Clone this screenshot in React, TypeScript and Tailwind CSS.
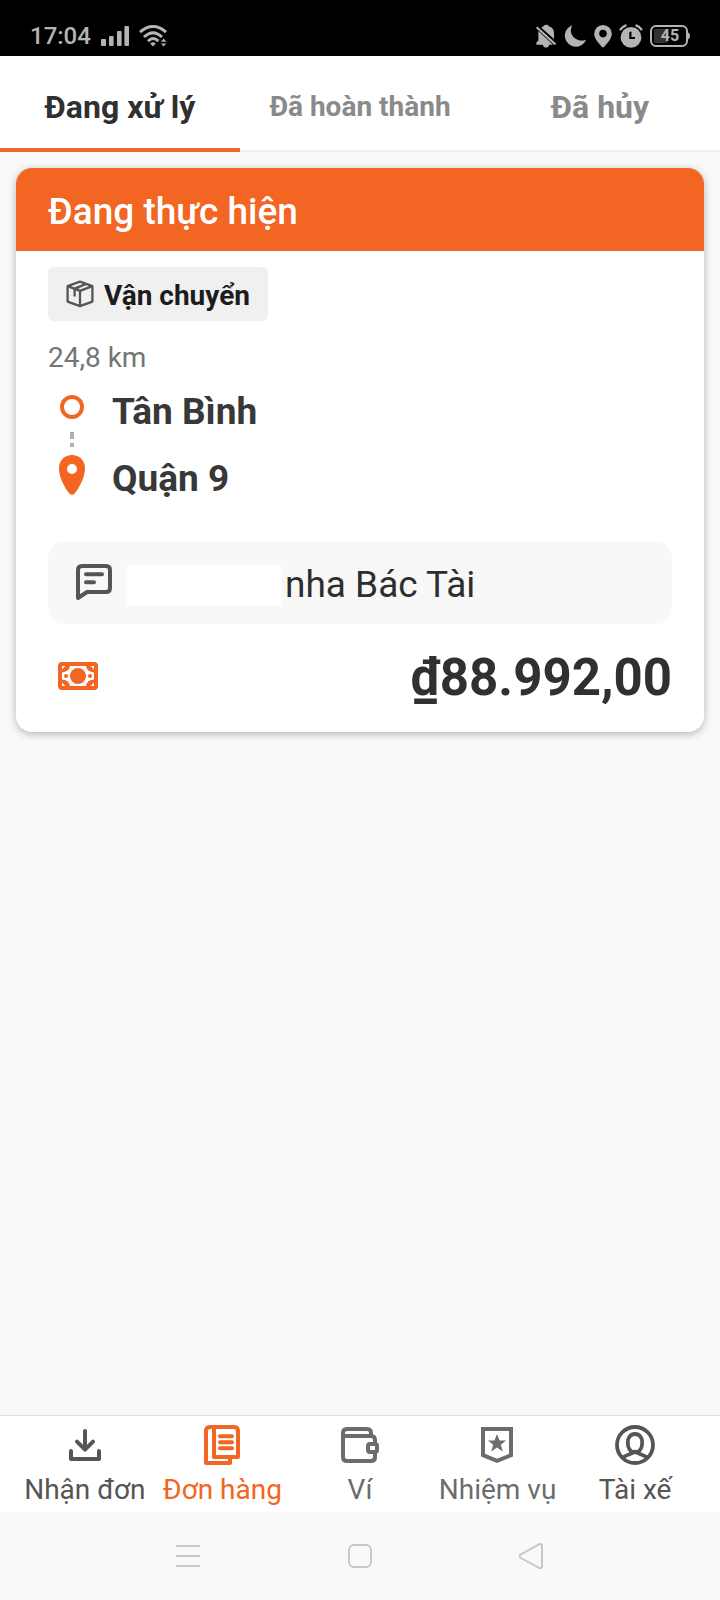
import { ReactNode, useState } from "react";
import clsx from "clsx";

const SignalIcon = () => (
  <svg width="28" height="20" viewBox="0 0 28 20" fill="currentColor">
    <rect x="0" y="13" width="5" height="7" rx="1" />
    <rect x="8" y="10" width="4.6" height="10" rx="1" />
    <rect x="16" y="5" width="4.6" height="15" rx="1" />
    <rect x="23.4" y="0" width="4.6" height="20" rx="1" />
  </svg>
);

const WifiIcon = () => (
  <svg width="28" height="22" viewBox="0 0 28 22" fill="none" stroke="currentColor">
    <path d="M1 7.2Q14-4.2 27 7.2" strokeWidth="3" />
    <path d="M5 12Q14 3.6 23 12" strokeWidth="3" />
    <path d="M9 16.2Q14 11 19.4 16.2" strokeWidth="3" />
    <path d="M11.2 18.4Q14 16.2 16.8 18.4L14 21.6Z" fill="currentColor" stroke="none" />
    <path d="M22 16.8 24.6 13.6 27.4 16.8ZM22 18.4 24.6 21.6 27.4 18.4Z" fill="currentColor" stroke="none" />
  </svg>
);

const BellOffIcon = () => (
  <svg width="20" height="24" viewBox="0 0 20 24" fill="currentColor">
    <path d="M7.6 2.2Q8.4 .8 10.4 .8T12.8 2.2Q18 3.6 18 9V15L5.4 3.8Q6.2 2.6 7.6 2.2Z" />
    <path d="M2.4 7 17 20.8H13.2Q12.6 23.6 10 23.6T6.8 20.8H.4V18.4L2.4 16.6Z" />
    <path d="M.6 3.2 19.4 20.4" stroke="currentColor" strokeWidth="2" fill="none" />
  </svg>
);

const MoonIcon = () => (
  <svg width="24" height="24" viewBox="0 0 24 24" fill="currentColor">
    <path d="M9.4 1.2A11 11 0 1 0 23.2 15.4Q19.6 17.4 15.2 16Q8.6 13.6 7.8 7.6Q7.6 4 9.4 1.2Z" />
  </svg>
);

const StatusPinIcon = () => (
  <svg width="18" height="24" viewBox="0 0 18 24" fill="currentColor" fillRule="evenodd">
    <path d="M9 1A8.8 8.8 0 0 1 17.8 9.8C17.8 15 13 19.6 10.2 22.8Q9 24 7.8 22.8C5 19.6.2 15 .2 9.8A8.8 8.8 0 0 1 9 1ZM9 5.8A3.8 3.8 0 1 0 9 13.4 3.8 3.8 0 0 0 9 5.8Z" />
  </svg>
);

const AlarmIcon = () => (
  <svg width="24" height="24" viewBox="0 0 24 24" fill="none">
    <circle cx="12" cy="13.4" r="10.4" fill="currentColor" />
    <path d="M1 6.2Q3.4 2.6 7.4 1.2M23 6.2Q20.6 2.6 16.6 1.2" stroke="currentColor" strokeWidth="2.4" />
    <path d="M11.4 7.8V14H16" stroke="#000" strokeWidth="2.2" />
  </svg>
);

const BatteryIcon = () => (
  <svg width="40" height="22" viewBox="0 0 40 22" fill="none">
    <rect x="4" y="4" width="14" height="14" rx="2" fill="#333" />
    <rect x="1" y="1" width="36" height="20" rx="5" stroke="currentColor" strokeWidth="2" />
    <path d="M38 7.6Q40 8 40 11T38 14.4Z" fill="currentColor" />
  </svg>
);

const BoxIcon = () => (
  <svg width="28" height="28" viewBox="0 0 28 28" fill="none" stroke="#555" strokeWidth="2.3" strokeLinejoin="round">
    <path d="M14 1.6 26.4 6.2V21.6L14 26.2 1.6 21.6V6.2Z" />
    <path d="M1.6 6.2 14 10.8 26.4 6.2M14 10.8V26.2" />
    <path d="M20.2 3.9 8.6 8.6V16.4M13.4 7.2 9 8.6" />
  </svg>
);

const RouteStartIcon = () => (
  <svg width="26" height="26" viewBox="0 0 26 26" fill="none" stroke="#f26522" strokeWidth="4">
    <circle cx="13" cy="13" r="10" />
  </svg>
);

const RoutePinIcon = () => (
  <svg width="26" height="40" viewBox="0 0 26 40" fill="#f26522" fillRule="evenodd">
    <path d="M13 0C20 0 26 5 26 13.4C26 22 20.4 32.6 15.6 38.6Q13 41.2 10.4 38.6C5.6 32.6 0 22 0 13.4C0 5 6 0 13 0ZM13 9A5 5 0 1 0 13 19 5 5 0 0 0 13 9Z" />
  </svg>
);

const NoteIcon = () => (
  <svg width="36" height="37" viewBox="0 0 36 37" fill="none" stroke="#555" strokeWidth="4" strokeLinecap="round" strokeLinejoin="round">
    <path d="M2 34V6Q2 2 6 2H30Q34 2 34 6V24Q34 28 30 28H11Z" />
    <path d="M10 10.2H26M10 18.2H18" />
  </svg>
);

const CashIcon = () => (
  <svg width="40" height="28" viewBox="0 0 40 28" fill="none">
    <rect width="40" height="28" rx="4" fill="#f26522" />
    <path d="M12 4H28Q29 10 36 10.4V17.6Q29 18 28 24H12Q11 18 4 17.6V10.4Q11 10 12 4Z" fill="#fff" />
    <path d="M4 4H7.4L4 7.4ZM36 4H32.6L36 7.4ZM4 24H7.4L4 20.6ZM36 24H32.6L36 20.6Z" fill="#fff" />
    <circle cx="20" cy="14" r="8" fill="#f26522" />
    <circle cx="8" cy="14" r="2" fill="#f26522" />
    <circle cx="32" cy="14" r="2" fill="#f26522" />
  </svg>
);

const ReceiveIcon = () => (
  <svg width="40" height="40" viewBox="0 0 40 40" fill="none" stroke="currentColor" strokeWidth="4" strokeLinecap="round" strokeLinejoin="round">
    <path d="M20 6V24M12 16.6 20 24.6 28 16.6M6 26V34H34V26" />
  </svg>
);

const OrdersIcon = () => (
  <svg width="40" height="40" viewBox="0 0 40 40" fill="none" stroke="currentColor" strokeWidth="4" strokeLinecap="round" strokeLinejoin="round">
    <path d="M12 2H32Q36 2 36 6V32H12V2H8Q4 2 4 6V38H28V33" />
    <path d="M18 11.2H30M18 17.2H30M18 23.2H30" />
  </svg>
);

const WalletIcon = () => (
  <svg width="40" height="40" viewBox="0 0 40 40" fill="none" stroke="currentColor" strokeWidth="4" strokeLinejoin="round">
    <path d="M3 11V32Q3 36 7 36H31Q35 36 35 32V28M35 19V15Q35 11 31 11H3V8Q3 4 7 4H27Q31 4 31 8V11" />
    <rect x="28" y="19" width="9" height="8" rx="2" />
  </svg>
);

const MissionIcon = () => (
  <svg width="40" height="40" viewBox="0 0 40 40" fill="none">
    <path d="M5 4H33V30.2L19 35.8 5 30.2Z" stroke="currentColor" strokeWidth="4" />
    <path d="M19 9 21.5 15.4H28L22.8 19.8 24.8 26.4 19 22.6 13.2 26.4 15.2 19.8 10 15.4H16.5Z" fill="currentColor" />
  </svg>
);

const DriverIcon = () => (
  <svg width="40" height="40" viewBox="0 0 40 40" fill="none" stroke="currentColor" strokeWidth="3.8">
    <circle cx="20" cy="20" r="18" />
    <path d="M20 9C25 9 27.2 13 27.2 17.6C27.2 22.4 25 27.4 20 27.4S12.8 22.4 12.8 17.6C12.8 13 15 9 20 9Z" />
    <path d="M7.4 33Q9 31.4 16.2 28.6L20 26.6 23.8 28.6Q31 31.4 32.6 33" />
  </svg>
);

const tabs = [
  { id: "processing", label: "Đang xử lý", size: "text-[32px]" },
  { id: "done", label: "Đã hoàn thành", size: "text-[28px]" },
  { id: "cancelled", label: "Đã hủy", size: "text-[32px]" },
];

const navItems: { id: string; label: string; icon: ReactNode; color: string }[] = [
  { id: "receive", label: "Nhận đơn", icon: <ReceiveIcon />, color: "text-[#555]" },
  { id: "orders", label: "Đơn hàng", icon: <OrdersIcon />, color: "text-[#555]" },
  { id: "wallet", label: "Ví", icon: <WalletIcon />, color: "text-[#6c6c6c]" },
  { id: "mission", label: "Nhiệm vụ", icon: <MissionIcon />, color: "text-[#6c6c6c]" },
  { id: "driver", label: "Tài xế", icon: <DriverIcon />, color: "text-[#555]" },
];

const StatusBar = () => (
  <div className="flex h-14 items-center justify-between bg-black px-[30px] pt-4 text-[#b4b4b4]">
    <div className="flex items-center gap-[10px]">
      <span className="text-2xl leading-6 font-medium">17:04</span>
      <SignalIcon />
      <WifiIcon />
    </div>
    <div className="flex items-center gap-[7px]">
      <BellOffIcon />
      <MoonIcon />
      <StatusPinIcon />
      <AlarmIcon />
      <div className="relative">
        <BatteryIcon />
        <span className="absolute inset-0 flex items-center justify-center text-base font-bold">
          45
        </span>
      </div>
    </div>
  </div>
);

const OrderCard = () => (
  <article className="overflow-hidden rounded-2xl bg-white shadow-[0_2px_8px_rgba(0,0,0,0.28)]">
    <h2 className="bg-[#f26522] px-8 pt-[22px] pb-[17px] text-[37px] leading-[44px] font-medium text-white">
      Đang thực hiện
    </h2>
    <div className="px-8 pt-4 pb-6">
      <div className="inline-flex h-[54px] items-center gap-2.5 rounded-md bg-[#f0f0f0] px-[18px] text-[#1c1c1c]">
        <BoxIcon />
        <span className="pt-1 text-[28px] leading-10 font-bold">Vận chuyển</span>
      </div>
      <p className="mt-[17px] text-[28px] leading-10 text-[#757575]">24,8 km</p>
      <div className="mt-3 flex gap-[27px] pl-[11px]">
        <div className="flex flex-col items-center pt-1">
          <RouteStartIcon />
          <span className="mt-3 h-[7px] w-1 bg-[#b0b0b0]" />
          <span className="mt-1 mb-2 h-1 w-1 bg-[#b0b0b0]" />
          <RoutePinIcon />
        </div>
        <div className="flex flex-col gap-[23px] text-[37px] leading-[44px] font-bold text-[#383838]">
          <p>Tân Bình</p>
          <p>Quận 9</p>
        </div>
      </div>
      <div className="mt-10 flex h-[83px] items-center rounded-2xl bg-[#f8f8f8] px-7">
        <NoteIcon />
        <div className="flex items-center gap-1 pt-1 pl-[15px]">
          <span className="h-10 w-[154px] bg-white" />
          <p className="text-[37px] text-[#2e2e2e]">nha Bác Tài</p>
        </div>
      </div>
      <div className="mt-5 flex items-center justify-between pl-[10px]">
        <CashIcon />
        <p className="pt-1 text-[51px] leading-[60px] font-bold text-[#303030]">₫88.992,00</p>
      </div>
    </div>
  </article>
);

const App = () => {
  const [activeTab, setActiveTab] = useState("processing");
  const [activeNav, setActiveNav] = useState("orders");

  return (
    <div className="flex min-h-screen flex-col bg-[#f9f9f9] font-['Roboto',sans-serif]">
      <StatusBar />
      <div className="flex h-24 bg-white">
        {tabs.map((tab) => (
          <button
            key={tab.id}
            type="button"
            onClick={() => setActiveTab(tab.id)}
            className={clsx(
              "flex-1 font-bold",
              tab.size,
              activeTab === tab.id
                ? "border-b-4 border-[#f26522] pt-2.5 text-[#303030]"
                : "border-b-2 border-[#efefef] pt-2 text-[#8a8a8a]"
            )}
          >
            {tab.label}
          </button>
        ))}
      </div>
      <main className="flex-1 p-4">
        <OrderCard />
      </main>
      <nav className="flex border-t border-[#dedede] bg-white px-4 pt-[9px] pb-[2px]">
        {navItems.map((item) => (
          <button
            key={item.id}
            type="button"
            onClick={() => setActiveNav(item.id)}
            className={clsx(
              "flex flex-1 basis-0 flex-col items-center gap-[5px] text-[28px] leading-10 whitespace-nowrap",
              activeNav === item.id ? "text-[#f26522]" : item.color
            )}
          >
            {item.icon}
            {item.label}
          </button>
        ))}
      </nav>
      <div className="flex h-[88px] items-center justify-center gap-[146px] text-[#c8c8c8]">
        <button type="button" aria-label="Menu">
          <svg width="26" height="26" viewBox="0 0 26 26" stroke="currentColor" strokeWidth="2">
            <path d="M1 3H25M1 13H25M1 23H25" />
          </svg>
        </button>
        <button type="button" aria-label="Home">
          <svg width="26" height="26" viewBox="0 0 26 26" fill="none" stroke="currentColor" strokeWidth="2">
            <rect x="2" y="2" width="22" height="22" rx="5" />
          </svg>
        </button>
        <button type="button" aria-label="Back">
          <svg width="26" height="26" viewBox="0 0 26 26" fill="none" stroke="currentColor" strokeWidth="2">
            <path d="M20 1.4Q23 0 23 3V23Q23 26 20 24.8L1.4 14.8Q-.6 13 1.4 11.6Z" />
          </svg>
        </button>
      </div>
    </div>
  );
};

export default App;
